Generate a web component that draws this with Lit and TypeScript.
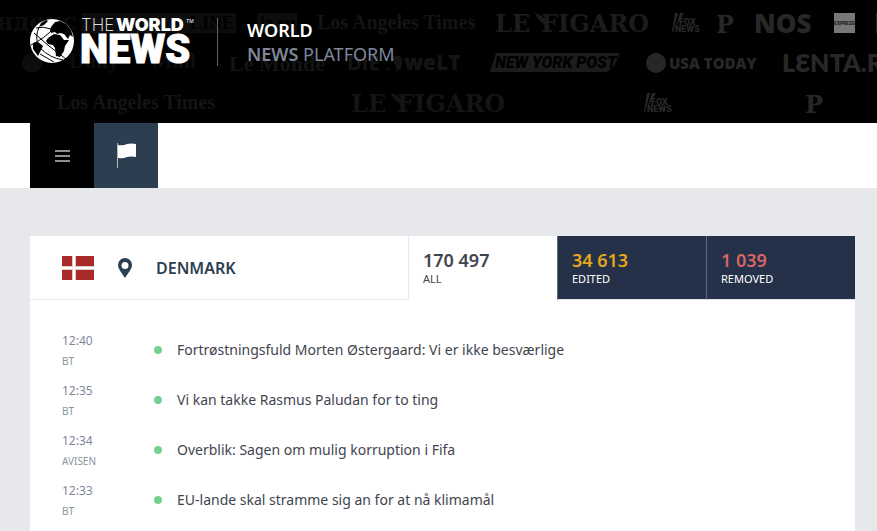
import { LitElement, html, svg, css } from "lit";
import { customElement } from "lit/decorators.js";

const stories = [
  { time: "12:40", source: "BT", title: "Fortrøstningsfuld Morten Østergaard: Vi er ikke besværlige" },
  { time: "12:35", source: "BT", title: "Vi kan takke Rasmus Paludan for to ting" },
  { time: "12:34", source: "AVISEN", title: "Overblik: Sagen om mulig korruption i Fifa" },
  { time: "12:33", source: "BT", title: "EU-lande skal stramme sig an for at nå klimamål" },
];

const fox = (x: number, y: number) => svg`
  <g transform="translate(${x} ${y})">
    <path d="M3 0H6L1 19H0ZM8 0H12L4 13L2 19Z" />
    <text class="fox" x="7" y="12">FOX</text>
    <text class="fox" x="3" y="19">NEWS</text>
  </g>`;

const feather = (x: number, y: number) => svg`
  <path d="M${x} ${y}q5 1 8 4q2 2 3 6l6 8l-8-7q-7-4-9-11z" />`;

@customElement("app-backdrop")
export class AppBackdrop extends LitElement {
  static styles = css`
    :host { display: block; }
    svg { display: block; width: 100%; height: 100%; }
    .far { fill: #0d0d0d; }
    .dim { fill: #141414; }
    .mid { fill: #1c1c1c; }
    .near { fill: #272727; }
    .gothic { font: 700 20px "Liberation Serif", serif; }
    .large { font: 700 22px "Liberation Serif", serif; }
    .slab { font: 700 24px "DejaVu Serif", serif; }
    .post { font: italic 900 16px Roboto, sans-serif; fill: #000; }
    .sans { font: 800 26px "Open Sans", sans-serif; }
    .welt { font: 800 21px "Open Sans", sans-serif; }
    .die { font: 700 20px "Open Sans", sans-serif; }
    .day { font: 800 15px "Open Sans", sans-serif; }
    .lenta { font: 800 25px Lato, sans-serif; }
    .fox { font: 900 9px Roboto, sans-serif; }
    .express { font: 700 5px "Liberation Mono", monospace; fill: #111; }
    .box { font: 700 18px "Liberation Serif", serif; fill: #000; }
  `;

  render() {
    return html`<svg aria-hidden="true">
      <g class="far">
        <text class="slab" x="-4" y="30">ндекс</text>
        <rect x="82" y="13" width="154" height="20" />
        <text class="box" x="190" y="29">LINE</text>
        <rect x="257" y="13" width="40" height="20" />
        <text class="box" x="260" y="29">iz.ru</text>
        <circle cx="32" cy="63" r="10" />
        <text class="large" x="69" y="68">Daily</text>
        <text class="large" x="152" y="68">Mail</text>
      </g>
      <g class="dim">
        <text class="gothic" x="317" y="29">Los Angeles Times</text>
        <text class="gothic" x="57" y="109">Los Angeles Times</text>
        <text class="large" x="229" y="71">Le Monde</text>
        <text class="die" x="347" y="70">DIE</text>
        <path d="M391 59q4-5 9-3q4 5 1 12l-5 4q1-5-1-8zM386 66l4 5l-3-1z" />
        <text class="welt" x="404" y="70">weLT</text>
        <text class="slab" x="351" y="112">LE</text>
        <text class="slab" x="397" y="112">FIGARO</text>
        ${feather(391, 93)}
      </g>
      <g class="mid">
        <text class="slab" x="495" y="32">LE</text>
        <text class="slab" x="541" y="32">FIGARO</text>
        ${feather(535, 13)}
        <path d="M496 53H620L614 66L607 72H490Z" />
        <text class="post" x="495" y="68">NEW YORK POST</text>
      </g>
      <g class="near">
        ${fox(672, 13)}
        ${fox(644, 93)}
        <text class="slab" x="716" y="33">P</text>
        <text class="slab" x="805" y="113">P</text>
        <text class="sans" x="754" y="33">NOS</text>
        <circle cx="656" cy="63" r="10" />
        <text class="day" x="669" y="69">USA TODAY</text>
        <text class="lenta" x="782" y="72">LƐNTA.RU</text>
        <rect x="876" y="13" width="20" height="20" />
      </g>
      <rect x="834" y="13" width="21" height="20" fill="#777" />
      <text class="express" x="834" y="25">EXPRESS</text>
    </svg>`;
  }
}

@customElement("app-root")
export class AppRoot extends LitElement {
  static styles = css`
    :host {
      display: block;
      min-height: 100vh;
      background: #e6e8ec;
      color: #3f4550;
      font-family: "Noto Sans", sans-serif;
    }
    * { box-sizing: border-box; }
    a { color: inherit; text-decoration: none; }
    button { border: 0; border-radius: 0; margin: 0; padding: 0; font: inherit; color: inherit; cursor: pointer; }
    .masthead {
      position: relative;
      display: flex;
      align-items: flex-start;
      height: 123px;
      padding: 18px 30px;
      overflow: hidden;
      background: #000;
    }
    .backdrop { position: absolute; inset: 0; }
    .brand { position: relative; display: flex; }
    .logo { display: block; width: 164px; height: 48px; fill: #fff; }
    .thin { font: 200 17px Inter, sans-serif; }
    .heavy { font: 900 18px Inter, sans-serif; }
    .black { font: 900 40px Roboto, sans-serif; stroke: #fff; stroke-width: 1px; }
    .tm { font: 400 5px Inter, sans-serif; }
    .tagline {
      position: relative;
      height: 48px;
      margin: 0 0 0 23px;
      padding-left: 29px;
      border-left: 1px solid #5c6373;
      font-size: 18px;
      line-height: 24px;
      font-weight: 400;
      color: #7f879b;
    }
    .tagline b { font-weight: 600; }
    .tagline .top { display: block; color: #fff; }
    .nav { display: flex; height: 65px; padding-left: 30px; background: #fff; }
    .nav button { display: grid; place-items: center; width: 64px; background: #000; }
    .nav .current { background: #2c3e50; }
    .card { margin: 48px 22px 0 30px; background: #fff; }
    .tabs { display: flex; height: 64px; }
    .country {
      flex: 1;
      display: flex;
      align-items: center;
      padding-left: 32px;
      border-bottom: 1px solid #e6e8ec;
      color: #2c3e50;
    }
    .country h1 { margin: 0 0 0 24px; font-size: 16px; line-height: 24px; font-weight: 600; }
    .pin { margin-left: 24px; }
    .tab {
      width: 149px;
      padding-left: 14px;
      border-left: 1px solid #e6e8ec;
      background: #fff;
      text-align: left;
      font-size: 11px;
      line-height: 16px;
    }
    .tab strong { display: block; font-size: 18px; line-height: 22px; font-weight: 600; }
    .tab.dark { background: #243149; color: #fff; border-left-color: #5f6b7c; border-bottom: 1px solid #e6e8ec; }
    .tab.dark .edited { color: #e6a817; }
    .tab.dark .removed { color: #d96565; }
    .list { margin: 0; padding: 25px 32px; list-style: none; }
    .story { display: flex; align-items: center; height: 50px; }
    .meta { width: 92px; padding-top: 1px; font-size: 12px; line-height: 20px; color: #7f879b; }
    .meta time, .meta span { display: block; }
    .meta span { font-size: 10px; color: #8b9698; }
    .dot { width: 8px; height: 8px; border-radius: 50%; background: #76d190; }
    .title { margin-left: 15px; font-size: 14px; line-height: 20px; }
  `;

  render() {
    return html`
      <header class="masthead">
        <app-backdrop class="backdrop"></app-backdrop>
        <a class="brand" href="#" aria-label="The World News">
          <svg class="logo" viewBox="0 0 164 48">
            <circle cx="22" cy="23" r="22" />
            <path fill="#000" d="M21 9l4-5 5-1 6 3 5 6 2 7-3-2-2 4-4-5-4-1-3 1-2-2-4 1-1-3zM18 20l6-4 6 1 4 5 5 0-4 6-1 5-4 6-4-1-1-8-2-3-5-1-2-3zM3 25l5-1 5 4-2 4-3 6-5-7zM11 5l5-3 2 1-4 4-5 2z" />
            <path fill="none" stroke="#000" d="M4 15Q18 28 36 41M1 27Q15 20 24 10M6 10Q13 8 21 11M10 30Q20 40 33 42M9 9Q5 19 8 26M10 36L24 44" />
            <text class="thin" x="51" y="13">THE</text>
            <text class="heavy" x="86" y="13">WORLD</text>
            <text class="black" x="50" y="45">NEWS</text>
            <text class="tm" x="156" y="5">TM</text>
          </svg>
        </a>
        <p class="tagline"><b class="top">WORLD</b><b>NEWS</b> PLATFORM</p>
      </header>
      <nav class="nav" aria-label="Main">
        <button type="button" aria-label="Menu">
          <svg width="15" height="12" fill="#8e8e8e"><path d="M0 0h15v2H0zM0 5h15v2H0zM0 10h15v2H0z" /></svg>
        </button>
        <button class="current" type="button" aria-label="Countries">
          <svg width="20" height="26" viewBox="0 0 20 26">
            <path fill="#b4bcc4" d="M1 0h1v25H1z" />
            <path fill="#fff" d="M2 2q5 1 9-1 4-1 9 0v13q-5-1-9 0-4 2-9 1z" />
          </svg>
        </button>
      </nav>
      <main class="card">
        <div class="tabs">
          <div class="country">
            <svg width="32" height="24" role="img" aria-label="Flag of Denmark">
              <path fill="#a82b2a" d="M0 0h32v24H0z" />
              <path fill="#e5c8c8" d="M10 0h4v24h-4zM0 10h32v4H0z" />
              <path fill="#fff" d="M11 0h2v24h-2zM0 11h32v2H0z" />
            </svg>
            <svg class="pin" width="14" height="20" viewBox="0 0 14 20" fill="#2c3e50" fill-rule="evenodd">
              <path d="M7 0a7 7 0 0 1 7 7c0 4-4 8-7 13C4 15 0 11 0 7a7 7 0 0 1 7-7zm0 4a3 3 0 1 0 0 7a3 3 0 0 0 0-7z" />
            </svg>
            <h1>DENMARK</h1>
          </div>
          <button class="tab" type="button"><strong>170 497</strong>ALL</button>
          <button class="tab dark" type="button"><strong class="edited">34 613</strong>EDITED</button>
          <button class="tab dark" type="button"><strong class="removed">1 039</strong>REMOVED</button>
        </div>
        <ul class="list">
          ${stories.map(
            (s) => html`<li class="story">
              <div class="meta"><time>${s.time}</time><span>${s.source}</span></div>
              <i class="dot"></i>
              <a class="title" href="#">${s.title}</a>
            </li>`
          )}
        </ul>
      </main>
    `;
  }
}
